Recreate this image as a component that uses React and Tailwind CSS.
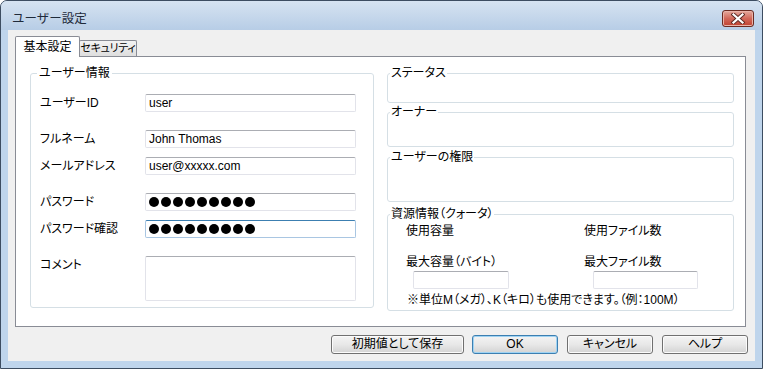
const font = "font-['Liberation_Sans','Noto_Sans_CJK_JP',sans-serif] [font-feature-settings:'palt']";

const Group = ({ title, className, legend, children }) => (
  <div className={`relative border border-[#d5dfe5] rounded-[3px] ${className}`}>
    <span className={`absolute -top-[8px] ${legend} bg-white px-[1px] leading-[14px] text-[12px] whitespace-nowrap`}>
      {title}
    </span>
    {children}
  </div>
);

const Input = ({ className = "", focused, children }) => (
  <div
    className={`flex items-center bg-white rounded-[2px] border pl-[3px] text-[12px] leading-[16px] ${
      focused ? "border-[#a9c6e2] border-t-[#3c7fb1]" : "border-[#e2e3ea] border-t-[#abadb3]"
    } ${className}`}
  >
    {children}
  </div>
);

const Dots = () => (
  <div className="flex items-center gap-[2px]">
    {Array.from({ length: 9 }).map((_, i) => (
      <span key={i} className="w-[10px] h-[10px] rounded-full bg-black" />
    ))}
  </div>
);

const Btn = ({ className = "", primary, children }) => (
  <button
    className={`h-[19px] rounded-[3px] border text-[12px] leading-[15px] text-black bg-gradient-to-b from-[#f4f4f4] via-[#e8e8e8] to-[#d3d3d3] ${
      primary ? "border-[#3c7fb1] shadow-[inset_0_0_0_1px_#9fd3f3]" : "border-[#707070] shadow-[inset_0_0_0_1px_#fbfbfb]"
    } ${className}`}
  >
    {children}
  </button>
);

const Row = ({ label, className = "", children, top }) => (
  <div className={`flex ${top ? "items-start" : "items-center"} ${className}`}>
    <span className="w-[105px] leading-[18px] text-[12px]">{label}</span>
    {children}
  </div>
);

export default function App() {
  return (
    <div className={`w-[763px] h-[369px] flex flex-col bg-[#bfd5ec] border border-[#3d4d61] rounded-t-[7px] overflow-hidden text-black ${font}`}>
      {/* title bar */}
      <div className="h-[29px] flex items-start justify-between bg-gradient-to-b from-[#d6e3f1] to-[#b7cde6]">
        <span className="ml-[11px] mt-[10px] text-[12.5px] leading-[16px] text-[#1e2a3a] [font-feature-settings:normal]">
          ユーザー設定
        </span>
        <div className="mt-[9px] mr-[8px] w-[32px] h-[17px] rounded-[3px] border border-[#6b2b22] bg-gradient-to-b from-[#e4a99e] via-[#d2685a] to-[#c0402e] flex items-center justify-center shadow-[inset_0_0_0_1px_#eab3a8]">
          <svg width="14" height="11" viewBox="0 0 14 11">
            <path d="M2.5 1.5 L11.5 9.5 M11.5 1.5 L2.5 9.5" stroke="#5d2a24" strokeWidth="4" strokeLinecap="square" />
            <path d="M2.5 1.5 L11.5 9.5 M11.5 1.5 L2.5 9.5" stroke="#ffffff" strokeWidth="2.2" strokeLinecap="square" />
          </svg>
        </div>
      </div>

      {/* client */}
      <div className="mx-[7px] h-[331px] bg-[#f0f0f0] flex flex-col pl-[7px] pt-[6px]">
        {/* tabs */}
        <div className="h-[20px] flex items-end text-[12px]">
          <div className="relative z-10 -mb-[1px] w-[65px] h-[21px] bg-white border border-b-0 border-[#898c95] rounded-t-[2px] flex justify-center pt-[2px] leading-[16px]">
            基本設定
          </div>
          <div className="-ml-[1px] w-[58px] h-[16px] border border-b-0 border-[#898c95] rounded-t-[2px] bg-gradient-to-b from-[#f3f3f3] to-[#dedede] flex justify-center leading-[15px] text-[11px] tracking-[-0.3px] whitespace-nowrap">
            セキュリティ
          </div>
        </div>

        {/* panel */}
        <div className="w-[731px] h-[271px] bg-white border border-[#898c95] flex gap-[13px] pl-[14px] pt-[16px]">
          <Group title="ユーザー情報" legend="left-[6px] px-[2px]" className="w-[344px] h-[235px] pl-[9px] pt-[20px]">
            <Row label="ユーザーID">
              <Input className="w-[211px] h-[18px]">user</Input>
            </Row>
            <Row label="フルネーム" className="mt-[18px]">
              <Input className="w-[211px] h-[18px]">John Thomas</Input>
            </Row>
            <Row label="メールアドレス" className="mt-[9px]">
              <Input className="w-[211px] h-[18px]">user@xxxxx.com</Input>
            </Row>
            <Row label="パスワード" className="mt-[18px]">
              <Input className="w-[211px] h-[18px]">
                <Dots />
              </Input>
            </Row>
            <Row label="パスワード確認" className="mt-[9px]">
              <Input focused className="w-[211px] h-[18px]">
                <Dots />
              </Input>
            </Row>
            <Row label="コメント" top className="mt-[18px]">
              <Input className="w-[211px] h-[45px]" />
            </Row>
          </Group>

          <div className="w-[347px] flex flex-col">
            <Group title="ステータス" legend="left-[2px]" className="h-[30px]" />
            <Group title="オーナー" legend="left-[2px]" className="h-[35px] mt-[9px]" />
            <Group title="ユーザーの権限" legend="left-[2px]" className="h-[45px] mt-[10px]" />
            <Group title="資源情報（クォータ）" legend="left-[2px]" className="h-[97px] mt-[12px] pl-[18px] pt-[7px] text-[12px]">
              <div className="flex leading-[18px]">
                <span className="w-[178px]">使用容量</span>
                <span>使用ファイル数</span>
              </div>
              <div className="flex mt-[13px]">
                <div className="w-[178px] flex flex-col">
                  <span className="leading-[18px]">最大容量（バイト）</span>
                  <Input className="ml-[7px] w-[96px] h-[18px]" />
                </div>
                <div className="flex flex-col">
                  <span className="leading-[18px]">最大ファイル数</span>
                  <Input className="ml-[9px] w-[105px] h-[18px]" />
                </div>
              </div>
              <div className="mt-[4px] ml-[1px] leading-[14px] whitespace-nowrap">
                ※単位M（メガ）、K（キロ）も使用できます。（例：100M）
              </div>
            </Group>
          </div>
        </div>

        {/* buttons */}
        <div className="flex justify-end pr-[7px] mt-[8px]">
          <Btn className="w-[133px]">初期値として保存</Btn>
          <Btn primary className="w-[86px] ml-[8px]">OK</Btn>
          <Btn className="w-[86px] ml-[9px]">キャンセル</Btn>
          <Btn className="w-[86px] ml-[9px]">ヘルプ</Btn>
        </div>
      </div>
    </div>
  );
}
